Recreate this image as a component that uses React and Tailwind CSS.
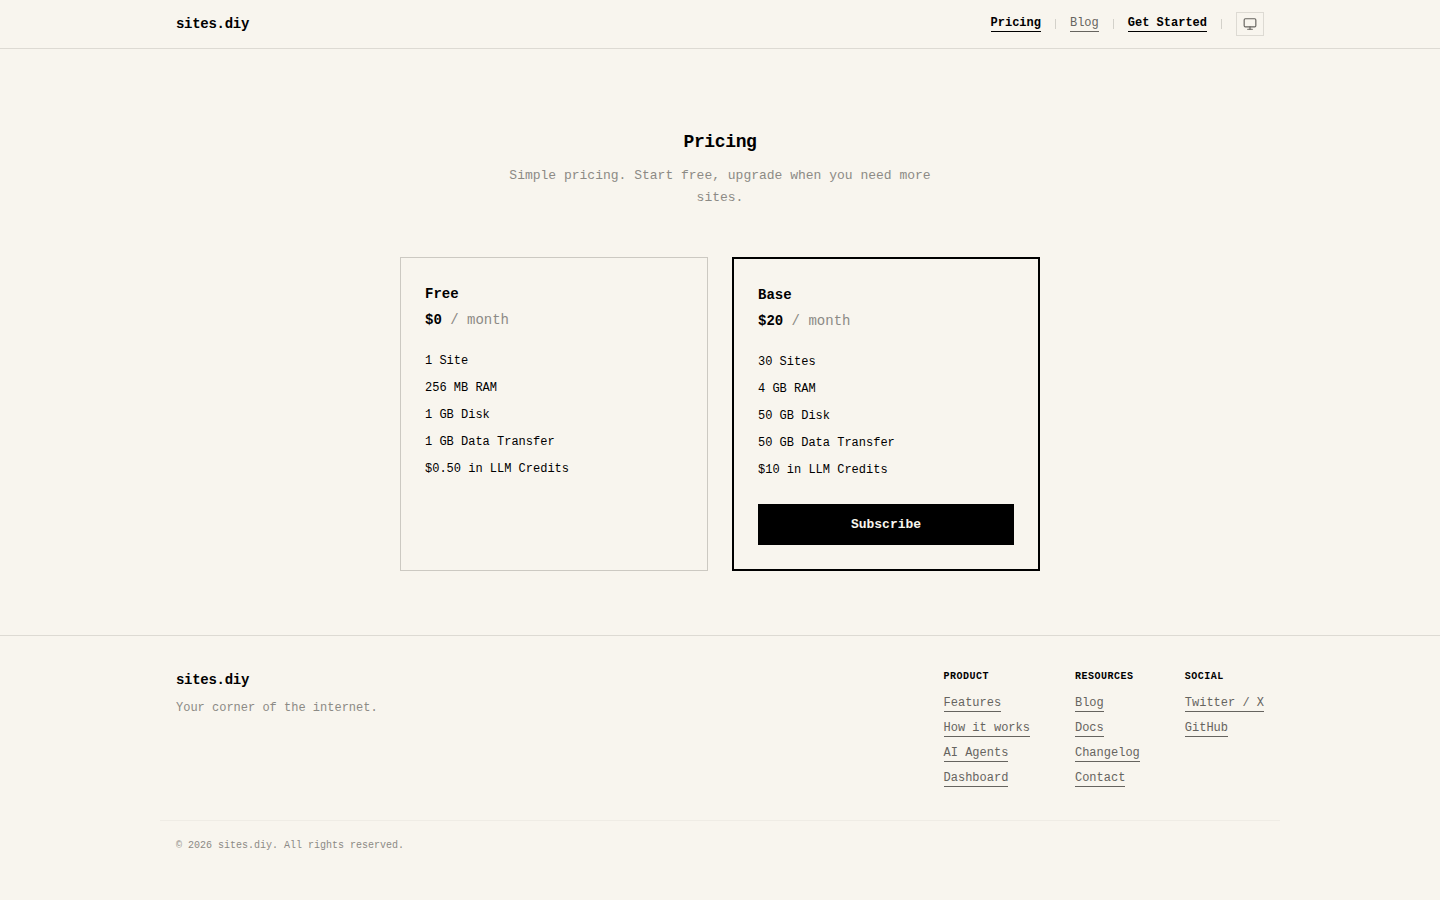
import { Monitor } from 'lucide-react';

const plans = [
  {
    name: 'Free',
    price: '$0',
    features: ['1 Site', '256 MB RAM', '1 GB Disk', '1 GB Data Transfer', '$0.50 in LLM Credits'],
  },
  {
    name: 'Base',
    price: '$20',
    features: ['30 Sites', '4 GB RAM', '50 GB Disk', '50 GB Data Transfer', '$10 in LLM Credits'],
    featured: true,
  },
];

const footerColumns = [
  { title: 'Product', links: ['Features', 'How it works', 'AI Agents', 'Dashboard'] },
  { title: 'Resources', links: ['Blog', 'Docs', 'Changelog', 'Contact'] },
  { title: 'Social', links: ['Twitter / X', 'GitHub'] },
];

const Separator = () => <span aria-hidden="true" className="h-[10px] w-px bg-[#d3d1ca]" />;

const Header = () => (
  <header className="border-b border-[#dddad3]">
    <div className="mx-auto flex max-w-[1120px] items-center justify-between px-4 py-3">
      <a href="#" className="text-[14px] leading-[24px] font-bold tracking-[-0.02em]">
        sites.diy
      </a>
      <nav className="flex items-center gap-[14px] text-[12px] leading-[15px]">
        <a href="#" className="border-b border-black font-bold">Pricing</a>
        <Separator />
        <a href="#" className="border-b border-[#66645f] text-[#66645f]">Blog</a>
        <Separator />
        <a href="#" className="border-b border-black font-bold">Get Started</a>
        <Separator />
        <button
          type="button"
          aria-label="Toggle theme"
          className="flex h-6 w-7 items-center justify-center border border-[#dddad3] text-[#66645f]"
        >
          <Monitor size={14} />
        </button>
      </nav>
    </div>
  </header>
);

const PlanCard = ({ plan }) => (
  <div className={plan.featured ? 'border-2 border-black p-6' : 'border border-[#ccc9c2] p-6'}>
    <h2 className="mb-[2px] text-[14px] leading-[24px] font-bold">{plan.name}</h2>
    <p className="mb-[19px] text-[14px] leading-[24px] text-[#8c8a85]">
      <span className="font-bold text-black">{plan.price}</span> / month
    </p>
    <ul className="flex flex-col gap-[7px] text-[12px] leading-[20px]">
      {plan.features.map((feature) => (
        <li key={feature}>{feature}</li>
      ))}
    </ul>
    {plan.featured && (
      <button
        type="button"
        className="mt-6 w-full bg-black py-[10px] text-[13px] leading-[21px] font-bold text-[#f8f5ee]"
      >
        Subscribe
      </button>
    )}
  </div>
);

const Footer = () => (
  <footer className="border-t border-[#dddad3]">
    <div className="mx-auto max-w-[1120px] pt-8 pb-12">
      <div className="flex justify-between px-4 pb-8">
        <div>
          <p className="text-[14px] leading-[24px] font-bold tracking-[-0.02em]">sites.diy</p>
          <p className="mt-[6px] text-[12px] leading-[20px] text-[#8c8a85]">Your corner of the internet.</p>
        </div>
        <div className="flex gap-[45px]">
          {footerColumns.map((column) => (
            <div key={column.title}>
              <h3 className="mb-2 text-[10px] leading-[18px] font-bold tracking-[0.05em] uppercase">
                {column.title}
              </h3>
              <ul className="flex flex-col gap-[6px] text-[12px] leading-[19px]">
                {column.links.map((link) => (
                  <li key={link}>
                    <a href="#" className="border-b border-[#66645f] pb-px text-[#66645f]">{link}</a>
                  </li>
                ))}
              </ul>
            </div>
          ))}
        </div>
      </div>
      <div className="border-t border-[#efece5] px-4 pt-4">
        <p className="text-[10px] leading-[18px] text-[#8c8a85]">© 2026 sites.diy. All rights reserved.</p>
      </div>
    </div>
  </footer>
);

const App = () => (
  <div className="min-h-screen bg-[#f8f5ee] font-['Liberation_Mono',monospace] text-black">
    <Header />
    <main className="mx-auto max-w-[640px] pt-20 pb-16">
      <div className="mx-auto mb-12 max-w-[460px] text-center">
        <h1 className="mb-[10px] text-[18px] leading-[26px] font-bold tracking-[-0.02em]">Pricing</h1>
        <p className="text-[13px] leading-[22px] text-[#8c8a85]">
          Simple pricing. Start free, upgrade when you need more sites.
        </p>
      </div>
      <div className="grid grid-cols-2 gap-6">
        {plans.map((plan) => (
          <PlanCard key={plan.name} plan={plan} />
        ))}
      </div>
    </main>
    <Footer />
  </div>
);

export default App;
